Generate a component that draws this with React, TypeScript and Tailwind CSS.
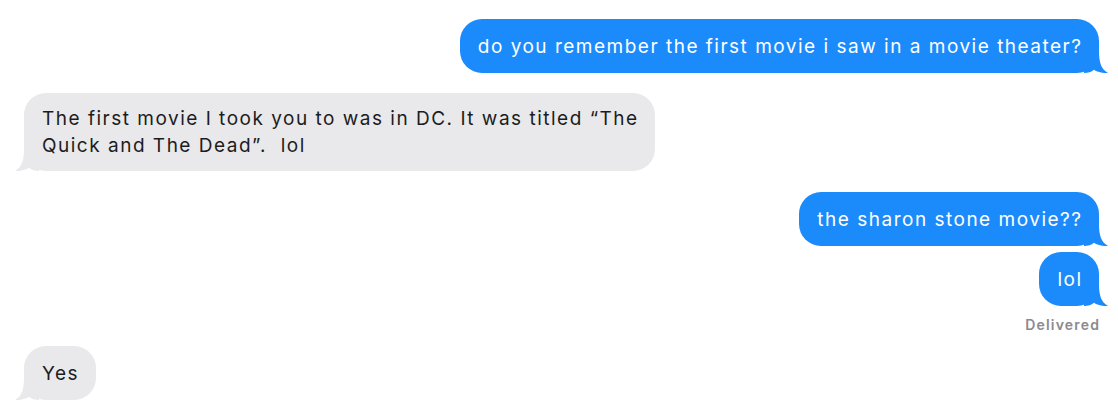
import type { ReactNode } from "react";

type Msg = {
  id: number;
  from: "me" | "them";
  text: ReactNode;
  gap: string;
};

const messages: Msg[] = [
  {
    id: 1,
    from: "me",
    text: "do you remember the first movie i saw in a movie theater?",
    gap: "mt-[19px]",
  },
  {
    id: 2,
    from: "them",
    text: (
      <>
        The first movie I took you to was in DC. It was titled “The
        <br />
        Quick and The Dead”.&nbsp; lol
      </>
    ),
    gap: "mt-[20px]",
  },
  { id: 3, from: "me", text: "the sharon stone movie??", gap: "mt-[21px]" },
  { id: 4, from: "me", text: "lol", gap: "mt-[6px]" },
];

const Tail = ({ side, color }: { side: "left" | "right"; color: string }) => (
  <svg
    width="24"
    height="22"
    viewBox="0 0 24 22"
    className={`absolute bottom-0 ${side === "right" ? "right-[-9px]" : "left-[-9px] -scale-x-100"}`}
    fill={color}
  >
    <path d="M0 0 H15 C15 11 17 18 24 22 C18 22.4 13 21 10 18.8 C7.5 21 4 22 0 22 Z" />
  </svg>
);

const Bubble = ({ from, children }: { from: "me" | "them"; children: ReactNode }) => {
  const mine = from === "me";
  return (
    <div
      className={`relative flex min-h-[54px] items-center rounded-[22px] pl-[18px] pr-[16.5px] py-3 text-[19px] leading-[27px] tracking-[1.5px] ${
        mine ? "bg-[#1b8bfc] text-white" : "bg-[#e9e9eb] text-[#1c1c1e]"
      }`}
    >
      <span className="relative z-10">{children}</span>
      <Tail side={mine ? "right" : "left"} color={mine ? "#1b8bfc" : "#e9e9eb"} />
    </div>
  );
};

export default function App() {
  return (
    <div
      className="flex h-[416px] w-[1118px] flex-col bg-white pl-[24px] pr-[19px]"
      style={{ fontFamily: "Inter, 'Noto Sans', sans-serif" }}
    >
      {messages.map((m) => (
        <div
          key={m.id}
          className={`flex ${m.gap} ${m.from === "me" ? "justify-end" : "justify-start"}`}
        >
          <Bubble from={m.from}>{m.text}</Bubble>
        </div>
      ))}
      <div className="mt-[10px] flex justify-end text-[14px] font-semibold leading-[17px] tracking-[1.2px] text-[#8a8a8e]">
        <span className="-mr-[1.2px]">Delivered</span>
      </div>
      <div className="mt-[13px] flex justify-start">
        <Bubble from="them">Yes</Bubble>
      </div>
    </div>
  );
}
